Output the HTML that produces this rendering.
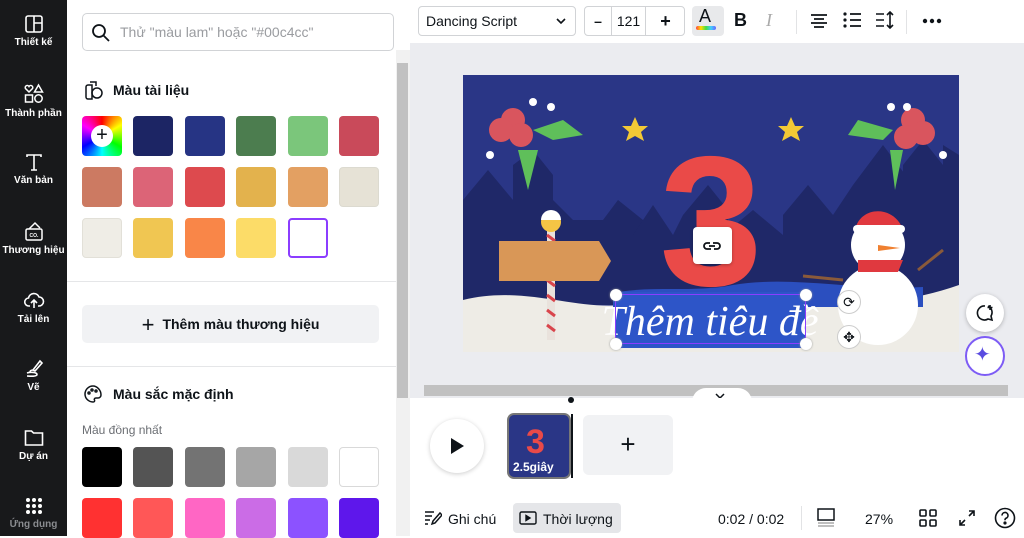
<!DOCTYPE html>
<html><head><meta charset="utf-8">
<style>
*{box-sizing:border-box;margin:0;padding:0}
body{width:1024px;height:536px;overflow:hidden;font-family:"Liberation Sans","Noto Sans CJK SC",sans-serif;background:#fff;position:relative;color:#0e1318}
.abs{position:absolute}
#side{left:0;top:0;width:67px;height:536px;background:#18191b}
.si{position:absolute;left:0;width:67px;text-align:center;color:#fff;font-size:10px;font-weight:bold}
.si svg{display:block;margin:0 auto 3px}
#panel{left:67px;top:0;width:329px;height:536px;background:#fff}
.sw{position:absolute;width:40px;height:40px;border-radius:4px}
.h{position:absolute;font-size:14px;font-weight:bold;color:#0e1318}
#main{left:410px;top:0;width:614px;height:536px}
</style></head><body>
<div id="side" class="abs">
 <div class="si" style="top:14px"><svg width="20" height="20" viewBox="0 0 20 20" fill="none" stroke="#fff" stroke-width="1.6"><rect x="2" y="2" width="16" height="16" rx="2"/><path d="M10 2v16M10 9h8"/></svg>Thiết kế</div>
 <div class="si" style="top:83px"><svg width="22" height="22" viewBox="0 0 22 22" fill="none" stroke="#fff" stroke-width="1.5"><path d="M6 9 2.5 5.5a2 2 0 0 1 3.5-2 2 2 0 0 1 3.5 2z"/><path d="M15.5 2 19.5 9h-8z"/><rect x="2.5" y="12" width="7" height="7"/><circle cx="15.5" cy="15.5" r="3.7"/></svg>Thành phần</div>
 <div class="si" style="top:152px"><svg width="20" height="20" viewBox="0 0 20 20" fill="none" stroke="#fff" stroke-width="1.6"><path d="M3 5V3h14v2M10 3v15M7 18h6"/></svg>Văn bản</div>
 <div class="si" style="top:220px"><svg width="22" height="22" viewBox="0 0 22 22" fill="none" stroke="#fff" stroke-width="1.5"><rect x="3" y="9" width="16" height="11" rx="1.5"/><path d="M6 9l6-6 5 5"/><text x="11" y="17" font-size="5" fill="#fff" stroke="none" text-anchor="middle">CO.</text></svg>Thương hiệu</div>
 <div class="si" style="top:289px"><svg width="22" height="22" viewBox="0 0 22 22" fill="none" stroke="#fff" stroke-width="1.6"><path d="M7 17H6a4 4 0 0 1-.5-8A5.5 5.5 0 0 1 16 8a4 4 0 0 1 0 9h-1"/><path d="M11 19v-8M8 14l3-3 3 3"/></svg>Tải lên</div>
 <div class="si" style="top:357px"><svg width="22" height="22" viewBox="0 0 22 22" fill="none" stroke="#fff" stroke-width="1.6"><path d="M10 13l7-9 2 2-7 8zM10 13c-2 0-3 1-3 2"/><path d="M4 16c3-1 10-1 10 1.5S5 19 4 19"/></svg>Vẽ</div>
 <div class="si" style="top:426px"><svg width="22" height="22" viewBox="0 0 22 22" fill="none" stroke="#fff" stroke-width="1.6"><path d="M2.5 5h6l2 2h9v12h-17z"/></svg>Dự án</div>
 <div class="si" style="top:496px;color:#8a8c90"><svg width="20" height="20" viewBox="0 0 20 20" fill="#fff"><circle cx="4" cy="4" r="2"/><circle cx="10" cy="4" r="2"/><circle cx="16" cy="4" r="2"/><circle cx="4" cy="10" r="2"/><circle cx="10" cy="10" r="2"/><circle cx="16" cy="10" r="2"/><circle cx="4" cy="16" r="2"/><circle cx="10" cy="16" r="2"/><circle cx="16" cy="16" r="2"/></svg>Ứng dụng</div>
</div>

<div id="panel" class="abs">
 <div class="abs" style="left:15px;top:13px;width:312px;height:38px;border:1px solid #d1d3d6;border-radius:5px"></div>
 <svg class="abs" style="left:24px;top:23px" width="20" height="20" viewBox="0 0 20 20" fill="none" stroke="#0e1318" stroke-width="1.8"><circle cx="8" cy="8" r="6"/><path d="M12.5 12.5 18 18"/></svg>
 <div class="abs" style="left:53px;top:24px;font-size:14px;color:#9a9ca0">Thử "màu lam" hoặc "#00c4cc"</div>
 <svg class="abs" style="left:16px;top:79px" width="22" height="22" viewBox="0 0 22 22" fill="none" stroke="#0e1318" stroke-width="1.5"><path d="M7 3h6v4M5 6h4v14H5a2 2 0 0 1-2-2V8a2 2 0 0 1 2-2z"/><circle cx="14" cy="14" r="5"/></svg>
 <div class="h" style="left:46px;top:82px">Màu tài liệu</div>
 <div class="sw" style="left:15px;top:116px;background:conic-gradient(red,yellow,lime,cyan,blue,magenta,red)"></div>
 <div class="abs" style="left:24px;top:125px;width:22px;height:22px;border-radius:50%;background:#fff;text-align:center;line-height:21px;font-size:20px">+</div>
 <div class="sw" style="left:66px;top:116px;background:#1c2564"></div>
 <div class="sw" style="left:118px;top:116px;background:#263484"></div>
 <div class="sw" style="left:169px;top:116px;background:#4c7d4f"></div>
 <div class="sw" style="left:221px;top:116px;background:#7bc67b"></div>
 <div class="sw" style="left:272px;top:116px;background:#c94a5a"></div>
 <div class="sw" style="left:15px;top:167px;background:#cc7a62"></div>
 <div class="sw" style="left:66px;top:167px;background:#dc6477"></div>
 <div class="sw" style="left:118px;top:167px;background:#dd4a4e"></div>
 <div class="sw" style="left:169px;top:167px;background:#e3b24d"></div>
 <div class="sw" style="left:221px;top:167px;background:#e3a062"></div>
 <div class="sw" style="left:272px;top:167px;background:#e6e2d6;border:1px solid #dcdad0"></div>
 <div class="sw" style="left:15px;top:218px;background:#efede6;border:1px solid #e2e0d8"></div>
 <div class="sw" style="left:66px;top:218px;background:#f0c652"></div>
 <div class="sw" style="left:118px;top:218px;background:#f98648"></div>
 <div class="sw" style="left:169px;top:218px;background:#fcdc68"></div>
 <div class="sw" style="left:221px;top:218px;background:#fff;border:2px solid #8b3dff"></div>
 <div class="abs" style="left:0;top:281px;width:329px;height:1px;background:#e5e6e8"></div>
 <div class="abs" style="left:15px;top:305px;width:297px;height:38px;background:#f1f2f4;border-radius:5px;text-align:center;line-height:38px;font-size:14px;font-weight:bold"><span style="font-size:22px;font-weight:normal;vertical-align:-3px;margin-right:8px">+</span>Thêm màu thương hiệu</div>
 <div class="abs" style="left:0;top:366px;width:329px;height:1px;background:#e5e6e8"></div>
 <svg class="abs" style="left:16px;top:384px" width="20" height="20" viewBox="0 0 20 20" fill="none" stroke="#0e1318" stroke-width="1.5"><path d="M10 2a8 8 0 0 0 0 16c1.5 0 2-1 1.5-2s0-2 1.5-2H15a3 3 0 0 0 3-3c0-5-4-9-8-9z"/><circle cx="6" cy="9" r="1"/><circle cx="9" cy="6" r="1"/><circle cx="13" cy="7" r="1"/></svg>
 <div class="h" style="left:46px;top:386px">Màu sắc mặc định</div>
 <div class="abs" style="left:15px;top:423px;font-size:12px;color:#6b6e73">Màu đồng nhất</div>
 <div class="sw" style="left:15px;top:447px;background:#000"></div>
 <div class="sw" style="left:66px;top:447px;background:#545454"></div>
 <div class="sw" style="left:118px;top:447px;background:#737373"></div>
 <div class="sw" style="left:169px;top:447px;background:#a6a6a6"></div>
 <div class="sw" style="left:221px;top:447px;background:#d9d9d9"></div>
 <div class="sw" style="left:272px;top:447px;background:#fff;border:1px solid #d9d9d9"></div>
 <div class="sw" style="left:15px;top:498px;background:#ff3131"></div>
 <div class="sw" style="left:66px;top:498px;background:#ff5757"></div>
 <div class="sw" style="left:118px;top:498px;background:#ff66c4"></div>
 <div class="sw" style="left:169px;top:498px;background:#cb6ce6"></div>
 <div class="sw" style="left:221px;top:498px;background:#8c52ff"></div>
 <div class="sw" style="left:272px;top:498px;background:#5e17eb"></div>
</div>
<div class="abs" style="left:396px;top:50px;width:14px;height:486px;background:#f1f1f1"></div>
<div class="abs" style="left:397px;top:63px;width:11px;height:335px;background:#c1c1c1"></div>

<div id="main" class="abs">
 <div class="abs" style="left:0;top:0;width:614px;height:43px;background:#fff"></div>
 <div class="abs" style="left:8px;top:6px;width:158px;height:30px;border:1px solid #d1d3d6;border-radius:4px;font-size:14px;line-height:28px;padding-left:7px">Dancing Script<svg class="abs" style="right:8px;top:10px" width="12" height="8" viewBox="0 0 12 8" fill="none" stroke="#0e1318" stroke-width="1.6"><path d="M2 2l4 4 4-4"/></svg></div>
 <div class="abs" style="left:174px;top:6px;width:101px;height:30px;border:1px solid #d1d3d6;border-radius:4px;font-size:14px;line-height:28px">
  <span class="abs" style="left:0;width:26px;text-align:center;font-weight:bold">–</span>
  <span class="abs" style="left:26px;width:1px;height:28px;background:#d1d3d6"></span>
  <span class="abs" style="left:27px;width:33px;text-align:center">121</span>
  <span class="abs" style="left:60px;width:1px;height:28px;background:#d1d3d6"></span>
  <span class="abs" style="left:61px;width:39px;text-align:center;font-size:18px;font-weight:bold">+</span></div>
 <div class="abs" style="left:282px;top:6px;width:32px;height:30px;background:#e8e9eb;border-radius:4px"></div>
 <div class="abs" style="left:289px;top:6px;font-size:18px">A</div>
 <div class="abs" style="left:286px;top:26px;width:20px;height:4px;border-radius:2px;background:linear-gradient(90deg,#f44,#fd0,#4d4,#4cf,#66f)"></div>
 <div class="abs" style="left:324px;top:10px;font-size:18px;font-weight:bold">B</div>
 <div class="abs" style="left:356px;top:10px;font-size:18px;font-style:italic;color:#aaa;font-family:'Liberation Serif',serif">I</div>
 <div class="abs" style="left:386px;top:10px;width:1px;height:24px;background:#e2e3e5"></div>
 <svg class="abs" style="left:400px;top:12px" width="18" height="18" viewBox="0 0 18 18" stroke="#0e1318" stroke-width="1.8"><path d="M1 3h16M4 7h10M1 11h16M4 15h10"/></svg>
 <svg class="abs" style="left:433px;top:11px" width="18" height="18" viewBox="0 0 18 18" stroke="#0e1318" stroke-width="1.8" fill="#0e1318"><circle cx="2" cy="3" r="1.6" stroke="none"/><circle cx="2" cy="9" r="1.6" stroke="none"/><circle cx="2" cy="15" r="1.6" stroke="none"/><path d="M7 3h11M7 9h11M7 15h11"/></svg>
 <svg class="abs" style="left:465px;top:11px" width="20" height="18" viewBox="0 0 20 18" stroke="#0e1318" stroke-width="1.6" fill="none"><path d="M1 3h8M1 9h8M1 15h8M15 1v16M12 4l3-3 3 3M12 14l3 3 3-3"/></svg>
 <div class="abs" style="left:496px;top:10px;width:1px;height:24px;background:#e2e3e5"></div>
 <svg class="abs" style="left:512px;top:18px" width="20" height="6" viewBox="0 0 20 6" fill="#0e1318"><circle cx="3" cy="3" r="2.2"/><circle cx="10" cy="3" r="2.2"/><circle cx="17" cy="3" r="2.2"/></svg>

 <div class="abs" style="left:0;top:43px;width:614px;height:355px;background:#ebecf0"></div>
 <svg class="abs" style="left:53px;top:75px" width="496" height="277" viewBox="0 0 496 277">
  <rect width="496" height="277" fill="#2a3686"/>
  <g fill="#1f2868">
   <path d="M0 230V125l25-30 25 30V90l20-15 20 25v25l20 20h30l15-20 25 20v25h40V140l25-30 20 25v95z"/>
   <path d="M170 230v-70l20-30 20 30 10-20 25 20v70z"/>
   <path d="M260 230v-70l30-25 30 25v-20l25-30 25 30 20-30 30-40 30 40v150z"/>
   <path d="M440 230V90l20-25 20 25v-20l16 10v150z"/>
  </g>
  <path d="M0 225c60-15 110 10 160 5s100-12 160-5 120 5 176-15v67H0z" fill="#eeece6"/>
  <path d="M150 218c40-8 80 0 120-8 60-10 120 6 190 2v20H150z" fill="#2b4fbf"/>
  <circle cx="50" cy="45" r="12" fill="#d9555e"/><circle cx="38" cy="55" r="12" fill="#d9555e"/><circle cx="58" cy="60" r="12" fill="#d9555e"/>
  <path d="M70 55l30-10 20 15-30 5zM55 75l10 40 10-40z" fill="#5fbf5a"/>
  <circle cx="450" cy="45" r="12" fill="#d9555e"/><circle cx="460" cy="58" r="12" fill="#d9555e"/><circle cx="443" cy="62" r="12" fill="#d9555e"/>
  <path d="M430 55l-35-10-10 15 35 5zM440 75l-8 40-5-40z" fill="#5fbf5a"/>
  <path d="M172 42l4 9 9 0-7 6 3 9-9-5-9 5 3-9-7-6 9 0z" fill="#f3c935"/>
  <path d="M328 42l4 9 9 0-7 6 3 9-9-5-9 5 3-9-7-6 9 0z" fill="#f3c935"/>
  <circle cx="70" cy="27" r="4" fill="#fff"/><circle cx="88" cy="32" r="4" fill="#fff"/><circle cx="27" cy="80" r="4" fill="#fff"/><circle cx="428" cy="32" r="4" fill="#fff"/><circle cx="444" cy="32" r="4" fill="#fff"/><circle cx="480" cy="80" r="4" fill="#fff"/>
  <rect x="84" y="150" width="8" height="115" fill="#e9e2dc"/>
  <path d="M84 160l8 6M84 175l8 6M84 190l8 6M84 205l8 6M84 220l8 6M84 235l8 6M84 250l8 6" stroke="#d9454c" stroke-width="3"/>
  <circle cx="88" cy="147" r="10" fill="#f4c545"/><path d="M78 145a10 10 0 0 1 20 0z" fill="#fff"/>
  <path d="M36 166h100l12 20-12 20H36z" fill="#d99757"/>
  <circle cx="415" cy="230" r="40" fill="#fff"/><circle cx="415" cy="170" r="27" fill="#fff"/>
  <path d="M392 155c5-25 40-25 48 0z" fill="#e0393f"/><rect x="390" y="150" width="52" height="8" rx="4" fill="#fff"/>
  <path d="M395 185h45l-5 12h-40z" fill="#e0393f"/>
  <path d="M415 170l22 3-22 3z" fill="#f08030"/>
  <path d="M380 205l-40-4M455 195l25-20" stroke="#8a5a3a" stroke-width="3"/>
  <text x="248" y="210" text-anchor="middle" font-family="Liberation Sans" font-weight="bold" font-size="185" fill="#ea4a48">3</text>
  <rect x="152" y="217" width="190" height="56" fill="#2d55c8"/>
  <text x="247" y="260" text-anchor="middle" font-family="Liberation Serif" font-style="italic" font-size="42" fill="#fff">Thêm tiêu đề</text>
 </svg>
 <div class="abs" style="left:283px;top:227px;width:39px;height:37px;background:#fff;border-radius:4px;box-shadow:0 1px 3px rgba(0,0,0,.3)"></div>
 <svg class="abs" style="left:292px;top:236px" width="20" height="20" viewBox="0 0 20 20" fill="none" stroke="#0e1318" stroke-width="1.8"><path d="M8 7H5a3 3 0 0 0 0 6h4M12 13h3a3 3 0 0 0 0-6h-4M7 10h6"/></svg>
 <div class="abs" style="left:205px;top:294px;width:191px;height:50px;border:1px solid #8b3dff"></div>
 <div class="abs" style="left:200px;top:289px;width:12px;height:12px;border-radius:50%;background:#fff;box-shadow:0 0 2px #999"></div>
 <div class="abs" style="left:390px;top:289px;width:12px;height:12px;border-radius:50%;background:#fff;box-shadow:0 0 2px #999"></div>
 <div class="abs" style="left:200px;top:338px;width:12px;height:12px;border-radius:50%;background:#fff;box-shadow:0 0 2px #999"></div>
 <div class="abs" style="left:390px;top:338px;width:12px;height:12px;border-radius:50%;background:#fff;box-shadow:0 0 2px #999"></div>
 <div class="abs" style="left:427px;top:290px;width:24px;height:24px;border-radius:50%;background:#fff;border:1px solid #ccc;text-align:center;line-height:22px;font-size:14px">⟳</div>
 <div class="abs" style="left:427px;top:325px;width:24px;height:24px;border-radius:50%;background:#fff;border:1px solid #ccc;text-align:center;line-height:22px;font-size:14px">✥</div>
 <div class="abs" style="left:556px;top:294px;width:38px;height:38px;border-radius:50%;background:#fff;box-shadow:0 1px 4px rgba(0,0,0,.25)"></div>
 <svg class="abs" style="left:565px;top:303px" width="20" height="20" viewBox="0 0 20 20" fill="none" stroke="#0e1318" stroke-width="1.6"><path d="M10 3a7 7 0 1 0 3 13l4 1-1-4a7 7 0 0 0-3-10"/><path d="M15 2v5M12.5 4.5h5"/></svg>
 <div class="abs" style="left:555px;top:336px;width:40px;height:40px;border-radius:50%;background:#fff;border:2px solid #7d5cf5"></div>
 <div class="abs" style="left:564px;top:342px;font-size:20px;color:#5a4be0">✦</div>
 <div class="abs" style="left:14px;top:385px;width:584px;height:11px;background:#c1c1c1"></div>
 <div class="abs" style="left:282px;top:388px;width:60px;height:14px;background:#fff;border-radius:14px 14px 0 0"></div>
 <svg class="abs" style="left:305px;top:393px" width="10" height="6" viewBox="0 0 10 6" fill="none" stroke="#0e1318" stroke-width="1.5"><path d="M1 1l4 4 4-4"/></svg>
 <div class="abs" style="left:0;top:398px;width:614px;height:138px;background:#fff"></div>
 <div class="abs" style="left:20px;top:419px;width:54px;height:54px;border-radius:50%;background:#fff;box-shadow:0 1px 5px rgba(0,0,0,.2)"></div>
 <svg class="abs" style="left:39px;top:437px" width="16" height="18" viewBox="0 0 16 18"><path d="M2 1l13 8-13 8z" fill="#0e1318"/></svg>
 <div class="abs" style="left:158px;top:397px;width:6px;height:6px;border-radius:50%;background:#0e1318"></div>
 <div class="abs" style="left:97px;top:413px;width:64px;height:66px;border:2px solid #777;border-radius:7px;overflow:hidden;background:#2a3686">
  <div class="abs" style="left:17px;top:8px;font-size:34px;font-weight:bold;color:#ea4a48">3</div>
  <div class="abs" style="left:4px;top:45px;font-size:12px;font-weight:bold;color:#fff">2.5giây</div>
 </div>
 <div class="abs" style="left:161px;top:414px;width:2px;height:64px;background:#0e1318"></div>
 <div class="abs" style="left:173px;top:415px;width:90px;height:60px;background:#f1f2f4;border-radius:6px;text-align:center;line-height:58px;font-size:26px;font-weight:300">+</div>
 <svg class="abs" style="left:14px;top:510px" width="18" height="16" viewBox="0 0 18 16" fill="none" stroke="#0e1318" stroke-width="1.5"><path d="M1 2h9M1 6h7M1 10h5M1 14h3M8 14l1-3 7-8 2 2-7 8z"/></svg>
 <div class="abs" style="left:38px;top:511px;font-size:14px">Ghi chú</div>
 <div class="abs" style="left:103px;top:503px;width:108px;height:30px;background:#e5e6e9;border-radius:4px"></div>
 <svg class="abs" style="left:109px;top:511px" width="18" height="14" viewBox="0 0 18 14" fill="none" stroke="#0e1318" stroke-width="1.4"><rect x="1" y="1" width="16" height="12" rx="1.5"/><path d="M7 4.5l4 2.5-4 2.5z" fill="#0e1318"/></svg>
 <div class="abs" style="left:133px;top:511px;font-size:14px">Thời lượng</div>
 <div class="abs" style="left:308px;top:511px;font-size:14px">0:02 / 0:02</div>
 <div class="abs" style="left:391px;top:506px;width:1px;height:24px;background:#e2e3e5"></div>
 <svg class="abs" style="left:406px;top:507px" width="20" height="20" viewBox="0 0 20 20" fill="none" stroke="#0e1318" stroke-width="1.5"><rect x="2" y="2" width="16" height="11"/><path d="M2 16h16M2 19h16" stroke="#aaa"/></svg>
 <div class="abs" style="left:455px;top:511px;font-size:14px">27%</div>
 <svg class="abs" style="left:509px;top:509px" width="18" height="18" viewBox="0 0 18 18" fill="none" stroke="#0e1318" stroke-width="1.6"><rect x="1" y="1" width="6" height="6" rx="1"/><rect x="11" y="1" width="6" height="6" rx="1"/><rect x="1" y="11" width="6" height="6" rx="1"/><rect x="11" y="11" width="6" height="6" rx="1"/></svg>
 <svg class="abs" style="left:548px;top:509px" width="18" height="18" viewBox="0 0 18 18" fill="none" stroke="#0e1318" stroke-width="1.6"><path d="M11 2h5v5M16 2l-5 5M7 16H2v-5M2 16l5-5"/></svg>
 <svg class="abs" style="left:584px;top:507px" width="22" height="22" viewBox="0 0 22 22" fill="none" stroke="#0e1318" stroke-width="1.6"><circle cx="11" cy="11" r="9.5"/><path d="M8 8.5a3 3 0 1 1 4 2.8c-1 .4-1 1-1 2"/><circle cx="11" cy="16" r=".8" fill="#0e1318"/></svg>
</div>
</body></html>
